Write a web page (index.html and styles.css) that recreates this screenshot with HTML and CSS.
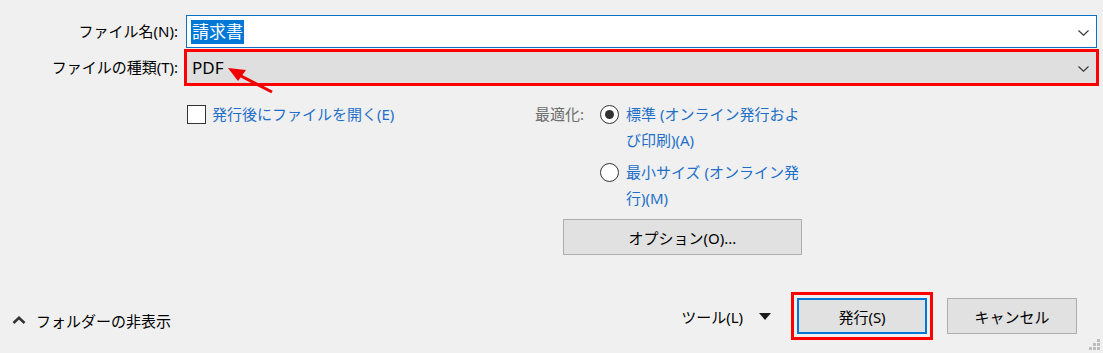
FILE: index.html
```html
<!DOCTYPE html>
<html lang="ja">
<head>
<meta charset="utf-8">
<title>発行</title>
<link rel="stylesheet" href="styles.css">
</head>
<body>
<div class="dialog">
  <div class="fields">
    <label class="flabel">ファイル名(N):</label>
    <div class="field field-name">
      <span class="sel">請求書</span>
      <svg class="chev" width="11" height="6" viewBox="0 0 11 6"><path d="M0.5 0.5 L5.5 5.2 L10.5 0.5" fill="none" stroke="#333" stroke-width="1.1"/></svg>
    </div>
    <label class="flabel">ファイルの種類(T):</label>
    <div class="field field-type">
      <span class="val">PDF</span>
      <svg class="chev" width="11" height="6" viewBox="0 0 11 6"><path d="M0.5 0.5 L5.5 5.2 L10.5 0.5" fill="none" stroke="#333" stroke-width="1.1"/></svg>
    </div>
  </div>

  <div class="options">
    <div class="col-left">
      <label class="check"><span class="box"></span><span class="link">発行後にファイルを開く(E)</span></label>
    </div>
    <div class="col-right">
      <div class="optimize">
        <span class="optlabel">最適化:</span>
        <div class="radios">
          <div class="radio"><span class="circle on"></span><span class="link">標準 (オンライン発行およ<br>び印刷)(A)</span></div>
          <div class="radio"><span class="circle"></span><span class="link">最小サイズ (オンライン発<br>行)(M)</span></div>
        </div>
      </div>
      <button class="btn btn-options">オプション(O)...</button>
    </div>
  </div>

  <div class="footer">
    <div class="folder">
      <svg width="14" height="8" viewBox="0 0 14 8"><path d="M1.5 7 L7 1.8 L12.5 7" fill="none" stroke="#333" stroke-width="2.6"/></svg>
      <span>フォルダーの非表示</span>
    </div>
    <div class="actions">
      <div class="tools"><span>ツール(L)</span><svg width="12" height="7" viewBox="0 0 12 7"><path d="M0 0 H12 L6 7 Z" fill="#1a1a1a"/></svg></div>
      <button class="btn btn-primary">発行(S)</button>
      <button class="btn btn-cancel">キャンセル</button>
    </div>
  </div>

  <svg class="arrow" width="1103" height="353" viewBox="0 0 1103 353">
    <path d="M241 76 L272 92" stroke="#f00000" stroke-width="3" fill="none"/>
    <path d="M228 68 L246 70 L238 81 Z" fill="#f00000"/>
  </svg>

  <svg class="grip" width="14" height="14" viewBox="0 0 14 14">
    <rect x="9" y="1" width="3" height="3" fill="#bcbcbc"/>
    <rect x="5" y="5" width="3" height="3" fill="#bcbcbc"/>
    <rect x="9" y="5" width="3" height="3" fill="#bcbcbc"/>
    <rect x="1" y="9" width="3" height="3" fill="#bcbcbc"/>
    <rect x="5" y="9" width="3" height="3" fill="#bcbcbc"/>
    <rect x="9" y="9" width="3" height="3" fill="#bcbcbc"/>
  </svg>
</div>
</body>
</html>
```

FILE: styles.css
```css
* { box-sizing: border-box; }

html, body {
  margin: 0;
  padding: 0;
  background: #f0f0f0;
}

body {
  font-family: "Noto Sans", "Noto Sans CJK JP", sans-serif;
  font-size: 15px;
  color: #000;
}

.dialog {
  position: relative;
  width: 1103px;
  height: 353px;
  overflow: hidden;
}

.fields {
  display: grid;
  grid-template-columns: 186px 911px;
  row-gap: 3px;
  padding-top: 15px;
}

.flabel {
  text-align: right;
  padding-right: 8px;
  line-height: 33px;
  white-space: nowrap;
  color: #000;
}

.field {
  height: 33px;
  border: 1px solid #dfdfdf;
  display: flex;
  align-items: center;
  padding: 0 7px 0 4px;
  font-size: 17px;
}

.field-name {
  background: #fff;
  border-color: #0a70c8;
}

.field-type {
  background: #dfdfdf;
  outline: 3px solid #ff0000;
  outline-offset: -1px;
}

.sel {
  display: inline-block;
  background: #0078d7;
  color: #fff;
  line-height: 24px;
  height: 24px;
  padding: 0 1px;
}

.val {
  line-height: 24px;
  padding-left: 1px;
}

.chev {
  margin-left: auto;
  margin-top: 2px;
}

.options {
  display: flex;
  margin-top: 17px;
  padding-left: 186px;
}

.col-left {
  width: 349px;
}

.link {
  color: #1e6fc8;
}

.check {
  display: flex;
  align-items: center;
  line-height: 26px;
}

.box {
  width: 19px;
  height: 19px;
  border: 1px solid #333;
  background: #fff;
  margin-left: 1px;
  margin-right: 6px;
}

.optimize {
  display: flex;
}

.optlabel {
  width: 65px;
  color: #6d6d6d;
  line-height: 26px;
}

.radios {
  display: flex;
  flex-direction: column;
  gap: 6px;
}

.radio {
  display: flex;
  align-items: flex-start;
  line-height: 26px;
  white-space: nowrap;
}

.circle {
  width: 19px;
  height: 19px;
  border: 1px solid #333;
  border-radius: 50%;
  background: #fff;
  margin-top: 4px;
  margin-right: 7px;
  flex: none;
  display: flex;
  align-items: center;
  justify-content: center;
}

.circle.on::after {
  content: "";
  width: 9px;
  height: 9px;
  border-radius: 50%;
  background: #333;
}

.btn {
  font: inherit;
  color: #000;
  background: #e1e1e1;
  border: 1px solid #adadad;
  padding: 0;
  height: 36px;
}

.btn-options {
  display: block;
  width: 239px;
  margin-left: 28px;
  margin-top: 8px;
}

.footer {
  display: flex;
  align-items: center;
  height: 36px;
  margin-top: 43px;
  padding: 0 26px 0 12px;
}

.folder {
  display: flex;
  align-items: center;
  gap: 10px;
  margin-top: 8px;
  color: #000;
}

.actions {
  margin-left: auto;
  display: flex;
  align-items: center;
}

.tools {
  display: flex;
  align-items: center;
  gap: 16px;
  margin-right: 26px;
}

.btn-primary {
  width: 130px;
  border: 2px solid #0078d7;
  outline: 3px solid #ff0000;
  outline-offset: 3px;
}

.btn-cancel {
  width: 130px;
  margin-left: 20px;
}

.arrow {
  position: absolute;
  left: 0;
  top: 0;
  pointer-events: none;
}

.grip {
  position: absolute;
  right: 1px;
  bottom: 1px;
}
```
